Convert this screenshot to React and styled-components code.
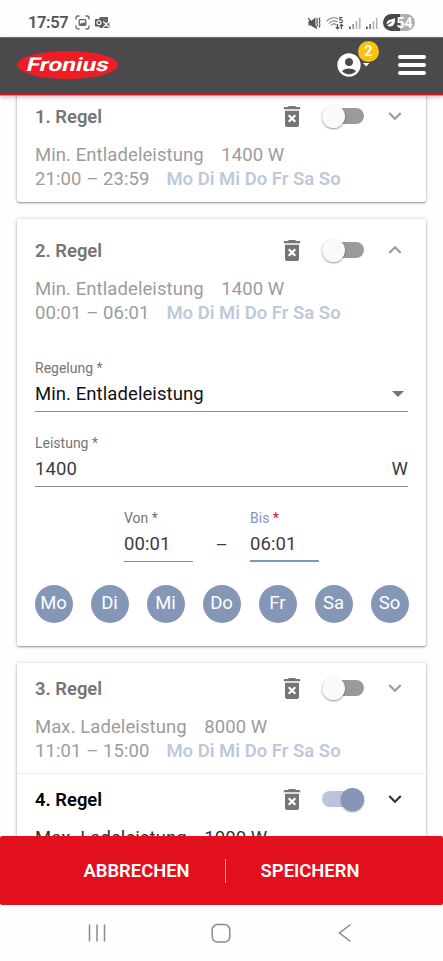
import React from 'react';
import styled, { createGlobalStyle, css } from 'styled-components';
import { MdAccountCircle, MdExpandLess, MdExpandMore } from 'react-icons/md';

const GlobalStyle = createGlobalStyle`
    * {
        box-sizing: border-box;
    }

    body {
        margin: 0;
        background: #fff;
        font-family: Roboto, "Liberation Sans", sans-serif;
    }

    svg {
        display: block;
        flex: none;
    }
`

const Screen = styled.div`
    display: flex;
    flex-direction: column;
    width: 443px;
    height: 961px;
    overflow: hidden;
    background: #fefefe;
`

const StatusBar = styled.div`
    display: flex;
    flex: none;
    align-items: center;
    justify-content: space-between;
    height: 37px;
    padding: 8px 28px 0 28px;
    color: #555;
`

const StatusGroup = styled.div`
    display: flex;
    align-items: center;
    gap: 5px;
`

const Clock = styled.span`
    margin-right: 2px;
    font-size: 16.5px;
    font-weight: 600;
    letter-spacing: -0.4px;
`

const Battery = styled.div`
    display: flex;
    align-items: center;
    justify-content: center;
    width: 32px;
    height: 17px;
    border-radius: 9px;
    background: linear-gradient(90deg, #484848 54%, #b0b0b0 54%);
    color: #fff;
    font-size: 14px;
    font-weight: 700;
`

const Header = styled.header`
    position: relative;
    z-index: 1;
    display: flex;
    flex: none;
    align-items: center;
    height: 58px;
    padding: 0 17px 1px;
    background: #4a4a4c;
    border-top: 1px solid #6e6e70;
    border-bottom: 2px solid #e2101c;
    box-shadow: 0 1px 0 #dc8a8c, 0 2px 5px rgba(0, 0, 0, 0.25);
`

const Account = styled.div`
    position: relative;
    display: flex;
    align-items: center;
    margin-left: auto;
    margin-right: 28px;
    color: #fff;
`

const Badge = styled.span`
    position: absolute;
    top: -10px;
    left: 23px;
    width: 21px;
    height: 21px;
    border-radius: 50%;
    background: #fdc30c;
    font-size: 14.5px;
    font-weight: 600;
    line-height: 21px;
    text-align: center;
`

const Burger = styled.div`
    display: flex;
    flex-direction: column;
    gap: 4px;
    width: 28px;

    span {
        height: 4px;
        border-radius: 2px;
        background: #fff;
    }
`

const Content = styled.main`
    flex: 1;
    min-height: 0;
    overflow: hidden;
    padding: 0 17px;
`

const Card = styled.section`
    margin-bottom: 17px;
    border-radius: 2px;
    background: #fff;
    box-shadow: 0 1px 2px rgba(0, 0, 0, 0.38), 0 0 5px rgba(0, 0, 0, 0.14);

    ${p => p.$first && css`
        margin-top: -4px;
        padding-bottom: 1px;
    `}

    ${p => p.$open && css`
        padding: 6px 0 23px;
    `}
`

const Item = styled.div`
    padding: 11px 18px 10.5px;
    color: ${p => (p.$active ? '#333' : '#9c9c9c')};

    & + & {
        border-top: 1px solid #f0f0f0;
    }
`

const ItemHead = styled.div`
    display: flex;
    align-items: center;
    height: 28px;
    margin-bottom: 12.5px;
`

const Title = styled.h2`
    flex: 1;
    margin: 0;
    font-size: 18.4px;
    font-weight: 600;
    color: ${p => (p.$active ? '#000' : '#757575')};
`

const Toggle = styled.div`
    display: flex;
    align-items: center;
    justify-content: ${p => (p.$on ? 'flex-end' : 'flex-start')};
    width: 42px;
    height: 16px;
    margin: 0 18.5px 0 16px;
    border-radius: 8px;
    background: ${p => (p.$on ? '#bcc4d9' : '#9a9a9a')};

    span {
        flex: none;
        width: 23px;
        height: 23px;
        border-radius: 50%;
        background: ${p => (p.$on ? '#8497b6' : '#fafafa')};
        box-shadow: 0 1px 2px rgba(0, 0, 0, 0.4);
    }
`

const Line = styled.div`
    display: flex;
    gap: 17.5px;
    font-size: 18.5px;
    line-height: 24px;
    letter-spacing: 0.08px;
    white-space: nowrap;
`

const Days = styled.span`
    margin-left: -0.6px;
    font-weight: 600;
    letter-spacing: 0;
    color: #bdc9db;
`

const Form = styled.div`
    display: flex;
    flex-direction: column;
    padding: 24.5px 18px 0;
`

const Field = styled.div`
    width: ${p => (p.$short ? '69px' : 'auto')};
    height: 52.5px;
    margin-bottom: 22.5px;
    border-bottom: ${p => (p.$focus ? '2px solid #7f98b5' : '1px solid #8c8c8c')};
    color: #3c3c3c;

    label {
        display: block;
        font-size: 14px;
        line-height: 16px;
        letter-spacing: 0;
        color: ${p => (p.$focus ? '#8497b6' : '#757575')};
    }

    em {
        color: #e2101c;
        font-style: normal;
    }
`

const Value = styled.div`
    display: flex;
    align-items: center;
    justify-content: space-between;
    margin-top: 6.5px;
    font-size: 18.5px;
    line-height: 24px;
    letter-spacing: 0.08px;
    color: ${p => (p.$dark ? '#111' : 'inherit')};
`

const Times = styled.div`
    display: flex;
    justify-content: center;
    align-items: flex-start;
`

const Dash = styled.span`
    width: 57px;
    padding-top: 23.5px;
    color: #3c3c3c;
    font-size: 18.5px;
    line-height: 24px;
    text-align: center;
`

const DayPicker = styled.div`
    display: flex;
    justify-content: space-between;
    margin: 0.5px -0.5px 0;
`

const Day = styled.span`
    width: 38px;
    height: 38px;
    border-radius: 50%;
    background: #8497b6;
    color: #fff;
    font-size: 18.5px;
    line-height: 37px;
    text-align: center;
`

const Footer = styled.footer`
    position: relative;
    display: flex;
    flex: none;
    align-items: center;
    height: 69px;
    padding-left: 83.5px;
    border-radius: 2px;
    background: #e20f1d;
    color: #fff;
    font-size: 18.4px;
    font-weight: 600;
`

const Action = styled.span`
    white-space: nowrap;
`

const Separator = styled.i`
    width: 1px;
    height: 24px;
    margin: 0 35px;
    background: #f3a0a5;
`

const NavBar = styled.nav`
    display: flex;
    flex: none;
    gap: 104px;
    height: 56px;
    padding: 18px 0 0 87px;

    svg:last-child {
        margin-left: 3px;
    }
`

const Logo = () => (
    <svg width="101" height="28" viewBox="0 0 101 28">
        <ellipse cx="50.5" cy="14" rx="50.5" ry="14" fill="#ee1c25" />
        <text
            x="9"
            y="20"
            fill="#fff"
            fontFamily="Roboto, sans-serif"
            fontSize="19"
            fontWeight="700"
            textLength="82"
            lengthAdjust="spacingAndGlyphs"
            transform="translate(4.500 0) skewX(-14)"
        >Fronius</text>
    </svg>
)

const Trash = () => (
    <svg width="28" height="28" viewBox="0 0 24 24" fill="#757575">
        <path d="M15.500 4.200 14.700 3.400H9.300l-.8.8H5.600a.6.600 0 0 0-.6.600v1.400h14V4.800a.6.600 0 0 0-.6-.6z" />
        <path d="M6 7.400h12V19.700a1.700 1.700 0 0 1-1.700 1.700H7.700A1.700 1.700 0 0 1 6 19.700z" />
        <path d="m9.200 11.400 5.600 5.600m0-5.600-5.600 5.600" stroke="#fff" strokeWidth="1.900" />
    </svg>
)

const ScreenshotIcon = () => (
    <svg width="15" height="15" viewBox="0 0 15 15" fill="none" stroke="#666" strokeWidth="1.300">
        <path d="M1 4.500V3a2 2 0 0 1 2-2h1.500M10.500 1H12a2 2 0 0 1 2 2v1.500M14 10.500V12a2 2 0 0 1-2 2h-1.500M4.500 14H3a2 2 0 0 1-2-2v-1.500" />
        <rect x="4.200" y="4.700" width="6.600" height="5.600" rx="1" />
        <path d="m4.500 10 2-2.500 1.300 1 1.500-1.500 1.500 1.500v1.500H4.500z" fill="#666" stroke="none" />
    </svg>
)

const OutlookIcon = () => (
    <svg width="15" height="13" viewBox="0 0 15 13" fill="none">
        <path d="M4.500 1h8.500v5l1.500.5V12H4.500z" fill="#666" />
        <path d="m8 5.500 3 2.300L14.500 6M8 12l3-3.700 3.500 3.200" stroke="#fff" strokeWidth="1.100" />
        <rect x="0" y="3" width="8" height="7.500" rx="1" fill="#555" />
        <circle cx="4" cy="6.700" r="2" stroke="#fff" strokeWidth="1.200" />
    </svg>
)

const MutedIcon = () => (
    <svg width="13" height="14" viewBox="0 0 13 14" fill="none" stroke="#555">
        <path d="M0.500 5H3l4.500-3.500v11L3 9.500H.5z" fill="#555" stroke="none" />
        <path d="m0 2 9 10.500" strokeWidth="1.300" />
        <path d="m9.500 2-.8 1.700.8 1.700-.8 1.700.8 1.700-.8 1.700M12 1.500l-.8 1.700.8 1.700-.8 1.700.8 1.700-.8 1.700.8 1.500" strokeWidth="1.100" />
    </svg>
)

const WifiIcon = () => (
    <svg width="18" height="14" viewBox="0 0 18 14" fill="none" stroke="#888" strokeWidth="1.200">
        <path d="M.7 5.200C4 1.200 9 1 12 3M2.700 7.500C5 4.600 9 4.300 11.500 6M5 9.700c1.500-1.900 3.800-2 5.500-.7" />
        <path d="M16.500 1.600h-2.600v2.200c3-.6 3.200 2.800.8 2.800-.6 0-1-.2-1.300-.5" stroke="#555" />
        <path d="M11.500 8v4.500M9.800 11l1.700 1.800 1.700-1.800M15.500 13V8.500M13.800 10.200l1.700-1.800 1.700 1.800" stroke="#555" />
    </svg>
)

const SignalIcon = ({ strong }) => (
    <svg width="12" height="12" viewBox="0 0 12 12">
        <rect x="0" y="9.500" width="1.700" height="2.500" fill="#555" />
        <rect x="3.300" y="7" width="1.700" height="5" fill={strong ? '#999' : '#777'} />
        <rect x="6.600" y="4" width="1.700" height="8" fill="#b5b5b5" />
        <rect x="9.900" y="1" width="1.700" height="11" fill="#b5b5b5" />
    </svg>
)

const LeafIcon = () => (
    <svg width="11" height="11" viewBox="0 0 11 11">
        <path d="M10 1C10.500 6 8.500 9.500 5 9.500 2 9.500 1 7 2 5c1.200-2.500 4-2 8-4z" fill="#fff" />
        <path d="M.5 10.500C2 7.500 4 6 6.500 5" fill="none" stroke="#484848" strokeWidth="1.100" />
    </svg>
)

const Rule = ({ title, mode, power, time, active, open }) => (
    <Item $active={active}>
        <ItemHead>
            <Title $active={active}>{title}</Title>
            <Trash />
            <Toggle $on={active}><span /></Toggle>
            {open ? <MdExpandLess size={26} /> : <MdExpandMore size={26} />}
        </ItemHead>
        <Line><span>{mode}</span><span>{power}</span></Line>
        <Line><span>{time}</span><Days>Mo Di Mi Do Fr Sa So</Days></Line>
    </Item>
)

const days = ['Mo', 'Di', 'Mi', 'Do', 'Fr', 'Sa', 'So'];

const App = () => (
    <Screen>
        <GlobalStyle />
        <StatusBar>
            <StatusGroup>
                <Clock>17:57</Clock>
                <ScreenshotIcon />
                <OutlookIcon />
            </StatusGroup>
            <StatusGroup>
                <MutedIcon />
                <WifiIcon />
                <SignalIcon strong />
                <SignalIcon />
                <Battery><LeafIcon />54</Battery>
            </StatusGroup>
        </StatusBar>
        <Header>
            <Logo />
            <Account>
                <MdAccountCircle size={28} />
                <svg width="7" height="4" viewBox="0 0 7 4"><path d="M0 0h6.500L3.200 3.500z" fill="#fff" /></svg>
                <Badge>2</Badge>
            </Account>
            <Burger><span /><span /><span /></Burger>
        </Header>
        <Content>
            <Card $first>
                <Rule title="1. Regel" mode="Min. Entladeleistung" power="1400 W" time="21:00 – 23:59" />
            </Card>
            <Card $open>
                <Rule title="2. Regel" mode="Min. Entladeleistung" power="1400 W" time="00:01 – 06:01" open />
                <Form>
                    <Field>
                        <label>Regelung *</label>
                        <Value $dark>
                            Min. Entladeleistung
                            <svg width="20" height="6" viewBox="0 0 20 6"><path d="M4 0h12l-6 6z" fill="#757575" /></svg>
                        </Value>
                    </Field>
                    <Field>
                        <label>Leistung *</label>
                        <Value>1400<span>W</span></Value>
                    </Field>
                    <Times>
                        <Field $short>
                            <label>Von *</label>
                            <Value>00:01</Value>
                        </Field>
                        <Dash>–</Dash>
                        <Field $short $focus>
                            <label>Bis <em>*</em></label>
                            <Value>06:01</Value>
                        </Field>
                    </Times>
                    <DayPicker>
                        {days.map(day => <Day key={day}>{day}</Day>)}
                    </DayPicker>
                </Form>
            </Card>
            <Card>
                <Rule title="3. Regel" mode="Max. Ladeleistung" power="8000 W" time="11:01 – 15:00" />
                <Rule title="4. Regel" mode="Max. Ladeleistung" power="1000 W" time="15:00 – 18:00" active />
            </Card>
        </Content>
        <Footer>
            <Action>ABBRECHEN</Action>
            <Separator />
            <Action>SPEICHERN</Action>
        </Footer>
        <NavBar>
            <svg width="20" height="20" viewBox="0 0 20 20" stroke="#8a8a8a" strokeWidth="1.500">
                <path d="M2.500 1.500v17M10 1.500v17M17.500 1.500v17" />
            </svg>
            <svg width="20" height="20" viewBox="0 0 20 20">
                <rect x="1.200" y="1.500" width="17.600" height="17.600" rx="5.500" fill="none" stroke="#8a8a8a" strokeWidth="1.500" />
            </svg>
            <svg width="14" height="20" viewBox="0 0 14 20">
                <path d="M12.500 1.500 1.500 10l11 8.500" fill="none" stroke="#8a8a8a" strokeWidth="1.500" />
            </svg>
        </NavBar>
    </Screen>
)

export default App;
